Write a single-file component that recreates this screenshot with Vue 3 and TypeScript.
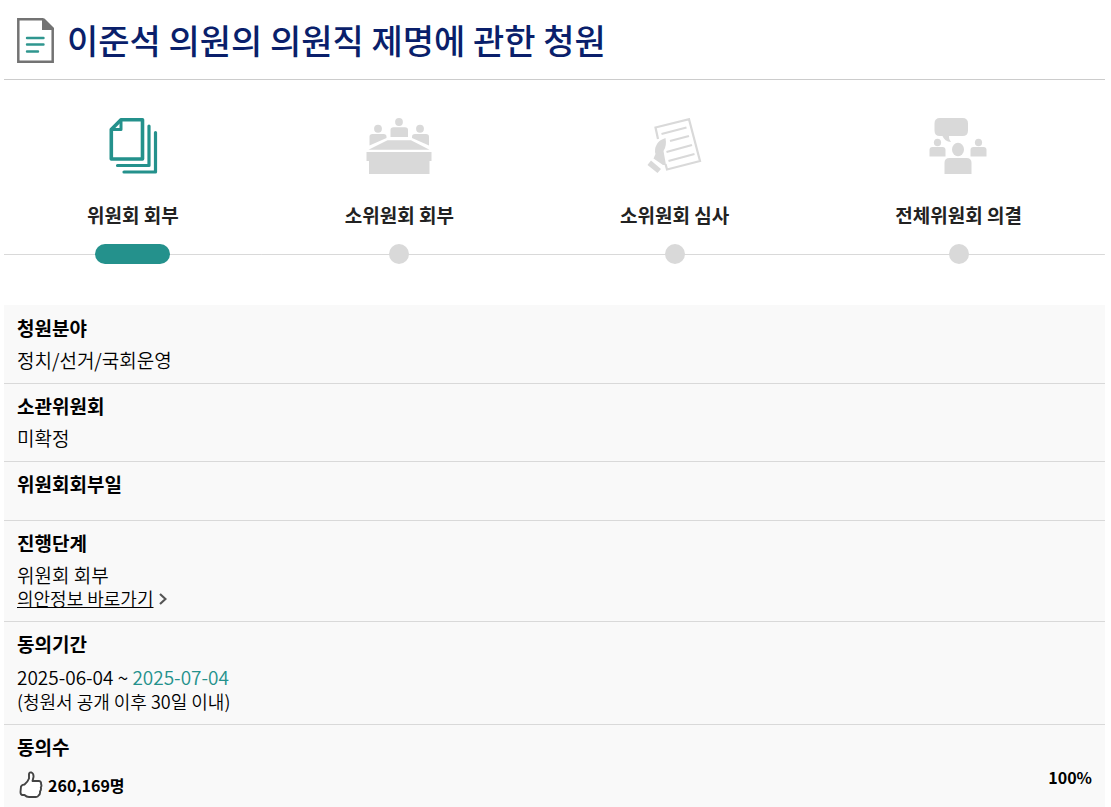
<script setup lang="ts">
interface Step {
  id: string
  label: string
  active: boolean
}

const title = '이준석 의원의 의원직 제명에 관한 청원'

const steps: Step[] = [
  { id: 'refer', label: '위원회 회부', active: true },
  { id: 'subRefer', label: '소위원회 회부', active: false },
  { id: 'subReview', label: '소위원회 심사', active: false },
  { id: 'plenary', label: '전체위원회 의결', active: false },
]

const period = { start: '2025-06-04', end: '2025-07-04' }
const agreeCount = 260169
const agreeRate = 100
</script>

<template>
  <main class="petition">
    <header class="head">
      <svg class="head-icon" viewBox="0 0 38 46" aria-hidden="true">
        <path d="M1.300 2.300H25.500L35.700 12V44.700H1.300Z" fill="#fff" stroke="#737373" stroke-width="2.500" />
        <path d="M25 1.500H27.500L37 11V13H25Z" fill="#737373" />
        <path d="M10 21H26.500M10 27.500H26.500M10 34.500H21" fill="none" stroke="#2f968f" stroke-width="2.400" stroke-linecap="round" />
      </svg>
      <h1>{{ title }}</h1>
    </header>

    <ol class="steps">
      <li v-for="step in steps" :key="step.id" class="step" :class="{ active: step.active }">
        <svg v-if="step.id === 'refer'" class="step-icon" viewBox="0 0 70 56" aria-hidden="true">
          <g fill="none" stroke="currentColor" stroke-width="3.600" stroke-linejoin="round" stroke-linecap="round">
            <path d="M23 1.800H44.500V41H13.300V11.500Z" />
            <path d="M23 2V11.500H13.500" stroke-width="3" />
            <path d="M51 8V47.500H19.500M57.500 14.500V54H26" stroke-width="3.200" />
          </g>
        </svg>
        <svg v-else-if="step.id === 'subRefer'" class="step-icon" viewBox="0 0 70 56" fill="currentColor" aria-hidden="true">
          <ellipse cx="35" cy="4" rx="3.900" ry="4" />
          <ellipse cx="14" cy="10.800" rx="3.900" ry="4" />
          <ellipse cx="56" cy="10.800" rx="3.900" ry="4" />
          <path d="M26.500 19V12Q26.500 9.200 29.500 9.200H41Q44 9.200 44 12V19Z" />
          <path d="M5.500 27.500V18.700Q5.500 15.900 8.500 15.900H19.500Q22.500 15.900 22.500 18.700V20Z" />
          <path d="M65 27.500V18.700Q65 15.900 62 15.900H51Q48 15.900 48 18.700V20Z" />
          <path d="M23.500 22.200H47L65.500 31.800H4.500Z" />
          <path d="M2.500 34H67.500V43H65.500V56H5V43H2.500Z" />
        </svg>
        <svg v-else-if="step.id === 'subReview'" class="step-icon" viewBox="0 0 70 56" aria-hidden="true">
          <g fill="none" stroke="currentColor" stroke-width="2.200">
            <path d="M18 21L15.500 9.500L49 1.200L60 43L27 51.500L25.500 46" />
            <path d="M21.500 16L46.500 9.500M30 23L49 18M26.500 34L52 27M28.500 43L54.500 36" />
          </g>
          <path d="M25.500 20Q19 22 17 26Q14 31 15.500 36L13.500 40.500L23 47H26L23.500 33Q27 28 25.500 20Z" fill="currentColor" />
          <path d="M11 42.500L21 51L17.500 55L7.500 47Z" fill="currentColor" />
        </svg>
        <svg v-else class="step-icon" viewBox="0 0 70 56" fill="currentColor" aria-hidden="true">
          <path d="M16 0H38.500Q44 0 44 5.500V12.500Q44 18 38.500 18H25Q24.500 21 27 24Q20.500 23.500 18.500 18H16Q10.500 18 10.500 12.500V5.500Q10.500 0 16 0Z" />
          <ellipse cx="13.500" cy="24.500" rx="3.600" ry="3.800" />
          <ellipse cx="54.500" cy="24.500" rx="3.600" ry="3.800" />
          <ellipse cx="34" cy="31.500" rx="6" ry="6.800" />
          <path d="M5.500 38.500V32Q5.500 29 8.500 29H18.500Q21.500 29 21.500 32V38.500Z" />
          <path d="M46.500 38.500V32Q46.500 29 49.500 29H59.500Q62.500 29 62.500 32V38.500Z" />
          <path d="M20.500 56V45Q20.500 40 25.500 40H42.500Q47.500 40 47.500 45V56Z" />
        </svg>
        <span class="step-label">{{ step.label }}</span>
        <span class="marker"></span>
      </li>
    </ol>

    <dl class="info">
      <div class="row">
        <dt>청원분야</dt>
        <dd>정치/선거/국회운영</dd>
      </div>
      <div class="row">
        <dt>소관위원회</dt>
        <dd>미확정</dd>
      </div>
      <div class="row">
        <dt>위원회회부일</dt>
        <dd class="empty"></dd>
      </div>
      <div class="row">
        <dt>진행단계</dt>
        <dd>위원회 회부</dd>
        <dd class="link-line">
          <a href="#bill">의안정보 바로가기</a>
          <svg class="chevron" viewBox="0 0 8 12" aria-hidden="true">
            <path d="M1 1L6.500 6L1 11" fill="none" stroke="#555" stroke-width="2.200" />
          </svg>
        </dd>
      </div>
      <div class="row">
        <dt>동의기간</dt>
        <dd class="period">{{ period.start }} ~ <span class="until">{{ period.end }}</span></dd>
        <dd class="note">(청원서 공개 이후 30일 이내)</dd>
      </div>
      <div class="row">
        <dt>동의수</dt>
        <dd class="agree">
          <span class="count">
            <svg class="thumb" viewBox="0 0 24 28" aria-hidden="true">
              <path
                d="M2 15.500Q3 13.500 5.500 13.500Q9 10.500 10 7.500V3Q10.500 1 12.500 1.500Q14.800 2.500 14.500 6L13.500 10H20Q22.500 10.500 22 13Q23 14.500 21.800 16.500Q22.500 18.500 21 20.500Q21.500 23 19.500 24.500Q19 26 17 26H10Q7.500 26 5.500 24H3.500Q1.500 24 1.500 21Z"
                fill="#fff" stroke="#444" stroke-width="1.900" stroke-linejoin="round"
              />
            </svg>
            {{ agreeCount.toLocaleString('en-US') }}명
          </span>
          <span class="rate">{{ agreeRate }}%</span>
        </dd>
      </div>
    </dl>
  </main>
</template>

<style>
body {
  margin: 0;
  background: #fff;
}
</style>

<style scoped>
.petition {
  margin: 0 6px 0 4px;
  color: #000;
  font-family: "Noto Sans CJK KR", "Noto Sans", sans-serif;
  font-size: 19px;
}

.head {
  display: flex;
  align-items: center;
  gap: 12px;
  height: 79px;
  padding-left: 13px;
  border-bottom: 1px solid #ccc;
}

.head-icon {
  width: 38px;
  height: 46px;
}

h1 {
  margin: 0;
  color: #0a1f6b;
  font-size: 34px;
  font-weight: 500;
  line-height: 50px;
}

.steps {
  display: flex;
  margin: 0;
  padding: 38px 0 41px;
  list-style: none;
}

.step {
  display: flex;
  flex: 1 1 auto;
  flex-direction: column;
  align-items: center;
  color: #d9d9d9;
}

.step.active {
  color: #24918c;
}

.step-icon {
  width: 70px;
  height: 56px;
}

.step-label {
  margin-top: 26px;
  color: #222;
  font-weight: 700;
  line-height: 30px;
}

.marker {
  display: flex;
  align-items: center;
  justify-content: center;
  align-self: stretch;
  height: 20px;
  margin-top: 14px;
  background: linear-gradient(#d9d9d9, #d9d9d9) center / 100% 1px no-repeat;
}

.marker::before {
  width: 20px;
  height: 20px;
  border-radius: 10px;
  background: currentColor;
  content: "";
}

.active .marker::before {
  width: 75px;
}

.info {
  margin: 0;
  padding-top: 1px;
  background: #f9f9f9;
}

.row {
  padding: 7px 13px 11px;
  border-bottom: 1px solid #d9d9d9;
}

.row:last-child {
  border-bottom: 0;
}

dt {
  margin-bottom: 6px;
  font-weight: 700;
  line-height: 29px;
}

dd {
  margin: 0;
  font-weight: 350;
  line-height: 24px;
}

.empty {
  height: 5px;
}

.link-line {
  display: flex;
  align-items: center;
  gap: 5px;
  font-size: 18px;
  line-height: 23px;
}

a {
  color: inherit;
  text-decoration-skip-ink: none;
}

.chevron {
  width: 8px;
  height: 12px;
}

.period {
  line-height: 25px;
}

.until {
  color: #24918c;
}

.note {
  font-size: 18px;
}

.agree {
  display: flex;
  align-items: flex-start;
  justify-content: space-between;
  font-size: 16px;
  font-weight: 700;
}

.count {
  display: flex;
  align-items: center;
  gap: 5px;
  padding: 4px 0 0 2px;
}

.thumb {
  width: 24px;
  height: 28px;
}

.rate {
  line-height: 21px;
}
</style>
